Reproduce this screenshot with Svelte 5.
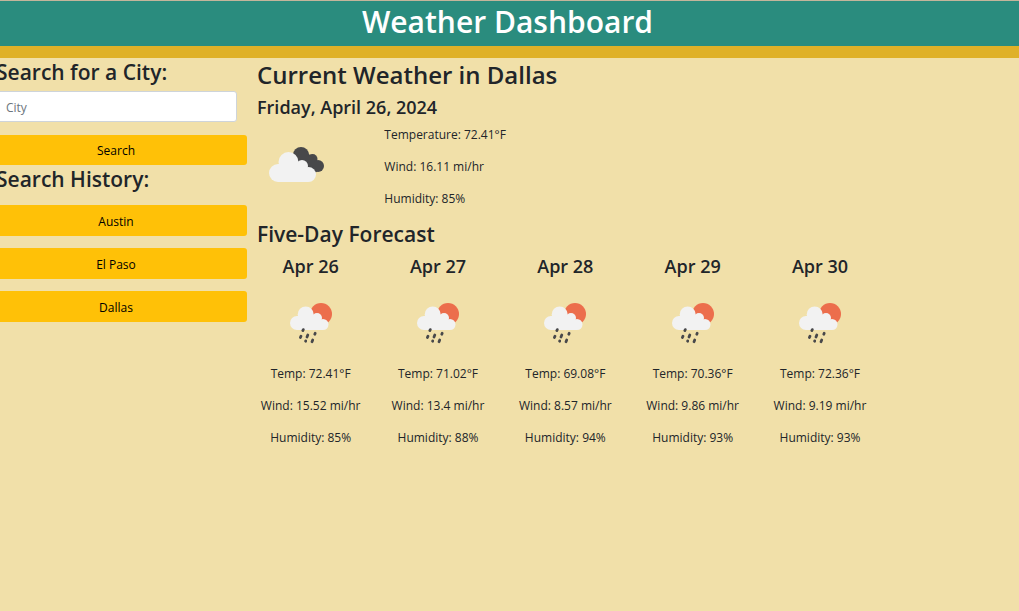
<script>
  const history = ['Austin', 'El Paso', 'Dallas'];
  const forecast = [
    { day: 'Apr 26', temp: '72.41', wind: '15.52', humidity: 85 },
    { day: 'Apr 27', temp: '71.02', wind: '13.4', humidity: 88 },
    { day: 'Apr 28', temp: '69.08', wind: '8.57', humidity: 94 },
    { day: 'Apr 29', temp: '70.36', wind: '9.86', humidity: 93 },
    { day: 'Apr 30', temp: '72.36', wind: '9.19', humidity: 93 }
  ];
  let city = $state('');
</script>

<header>
  <h1>Weather Dashboard</h1>
</header>

<div class="layout">
  <aside>
    <form onsubmit={(e) => e.preventDefault()}>
      <h3><label for="city">Search for a City:</label></h3>
      <div class="field">
        <input id="city" type="text" placeholder="City" bind:value={city} />
      </div>
      <button type="submit">Search</button>
    </form>
    <h3>Search History:</h3>
    <div class="history">
      {#each history as name}
        <button type="button">{name}</button>
      {/each}
    </div>
  </aside>

  <main>
    <section class="current">
      <h2>Current Weather in Dallas</h2>
      <h4>Friday, April 26, 2024</h4>
      <div class="now">
        <div class="now-icon">
          <svg width="80" height="50" viewBox="0 0 80 50" aria-hidden="true">
            <g fill="#48484a">
              <circle cx="41" cy="15" r="8" />
              <circle cx="52.5" cy="19" r="5" />
              <circle cx="58" cy="26" r="6" />
              <path d="M42 8L50 15L54 20L57 32L46 34L34 20Z" />
            </g>
            <g fill="#f2f2f2">
              <circle cx="18" cy="33" r="9" />
              <circle cx="28.5" cy="22" r="10" />
              <circle cx="42" cy="26" r="6" />
              <circle cx="48.5" cy="34.5" r="7.5" />
              <path d="M18 24H42L48 30V42H18Z" />
            </g>
          </svg>
        </div>
        <div class="readings">
          <p>Temperature: 72.41°F</p>
          <p>Wind: 16.11 mi/hr</p>
          <p>Humidity: 85%</p>
        </div>
      </div>
    </section>

    <h3>Five-Day Forecast</h3>
    <div class="days">
      {#each forecast as f}
        <article>
          <h4>{f.day}</h4>
          <svg width="60" height="56" viewBox="0 0 60 56" aria-hidden="true">
            <circle cx="40" cy="19" r="11" fill="#ec6e4c" />
            <g fill="#f2f2f2">
              <circle cx="16" cy="28" r="7" />
              <circle cx="24.7" cy="19.5" r="8" />
              <circle cx="36" cy="23" r="5" />
              <circle cx="42" cy="29.5" r="5.5" />
              <path d="M16 21H36L42 27V35H16Z" />
            </g>
            <g stroke="#48484a" stroke-width="2.8" stroke-linecap="round">
              <path d="M22.3 34.6L21.8 35.6M20 41.2L19.4 42.5M26.8 40L26 42M34.2 38.3L33.8 39.3M24.7 45.9L24.6 46.2M31.7 45L31 46.7" />
            </g>
          </svg>
          <p>Temp: {f.temp}°F</p>
          <p>Wind: {f.wind} mi/hr</p>
          <p>Humidity: {f.humidity}%</p>
        </article>
      {/each}
    </div>
  </main>
</div>

<style>
  :global(body) {
    margin: 0;
    background: #f1e0a9;
    color: #212529;
    font: 12px/20px "Open Sans", sans-serif;
    overflow-x: hidden;
  }
  h1, h2, h3, h4, p { margin: 0; }
  h1, h2, h3, h4 { font-weight: 600; }
  header {
    background: #2a8c7e;
    border-top: 1px solid #c4b59b;
    border-bottom: 12px solid #dfb128;
    text-align: center;
  }
  h1 {
    color: #fff;
    font-size: 30px;
    line-height: 41px;
    padding: 0 4px 4px 0;
  }
  h2 { font-size: 24px; line-height: 34px; }
  h3 { font-size: 21px; line-height: 29px; }
  h4 { font-size: 18px; line-height: 30px; }
  .layout {
    display: flex;
    margin-left: -15px;
  }
  aside {
    flex: none;
    width: 262px;
    box-sizing: border-box;
  }
  aside h3 { padding-left: 11px; }
  .field { padding: 4px 10px 13px; }
  input {
    display: block;
    width: 100%;
    height: 31px;
    box-sizing: border-box;
    padding: 5px 10px 4px;
    border: 1px solid #ced4da;
    border-radius: 3px;
    background: #fff;
    color: #212529;
    font: inherit;
  }
  input::placeholder { color: #6c757d; opacity: 1; }
  button {
    display: block;
    width: 100%;
    height: 31px;
    padding: 2px 0 0;
    border: 0;
    border-radius: 3px;
    background: #ffc107;
    color: #000;
    font: inherit;
    cursor: pointer;
  }
  form button { height: 30px; }
  .history {
    display: grid;
    gap: 12px;
    padding-top: 11px;
  }
  main { flex: 1; min-width: 0; margin-right: 8px; }
  main h2, main h3, .current h4 { padding-left: 10px; }
  .now { display: flex; margin-bottom: 11px; }
  .now-icon { width: calc(100% / 6); padding: 18px 0 0 13px; box-sizing: border-box; }
  .now-icon svg { display: block; }
  .readings { padding: 3px 0 0 10px; }
  .readings, article { display: flex; flex-direction: column; gap: 12px; }
  .days { display: grid; grid-template-columns: repeat(6, 1fr); padding-top: 2px; }
  article { align-items: center; text-align: center; }
  article svg { margin: 2px 0 1px; }
</style>
